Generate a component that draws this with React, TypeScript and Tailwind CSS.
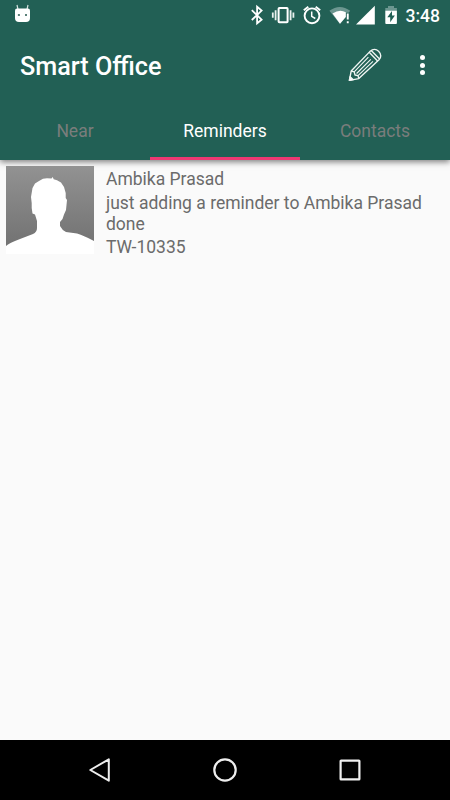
import React, { useState } from 'react';

const tabs = ['Near', 'Reminders', 'Contacts'];

const reminders = [
  {
    id: 'TW-10335',
    name: 'Ambika Prasad',
    text: 'just adding a reminder to Ambika Prasad done',
  },
];

const StatusBar: React.FC = () => (
  <div className="flex h-[30px] items-center justify-between pl-[14px] pr-[10px]">
    {/* Debug notification */}
    <svg className="h-[30px] w-[17px]" viewBox="14 0 17 30" fill="none">
      <path d="M18 9.5 17 5M27 9.5l1-4.500" stroke="#d5e2df" strokeWidth="1.2" />
      <path d="M15 10.5Q15 8.5 17 8.5H28Q30 8.5 30 10.5V18Q30 22 26 22H19Q15 22 15 18Z" fill="#fff" />
      <path d="M17.9 14h2v2h-2zM25 14h2v2h-2z" fill="#5b8079" />
    </svg>

    <div className="flex h-[30px] items-center">
      <svg className="h-[30px] w-[200px]" viewBox="200 0 200 30" fill="none">
        {/* Bluetooth */}
        <path d="M251.8 10.2 261.6 19.6 257.1 23.3V6.8L261.6 10.6 251.8 20" stroke="#fff" strokeWidth="1.8" />
        {/* Vibrate */}
        <rect x="278.6" y="8" width="9" height="14.3" rx="0.7" stroke="#fff" strokeWidth="2" />
        <path d="M275.6 10.2v10M290.6 10.2v10M272.8 12.4v5.4M293.4 12.4v5.4" stroke="#e9f0ee" strokeWidth="1.8" />
        {/* Alarm */}
        <circle cx="312" cy="15.8" r="7.4" stroke="#fff" strokeWidth="1.9" />
        <path d="M303.8 10.3 308.3 6.7M320.2 10.3 315.7 6.7" stroke="#fff" strokeWidth="1.9" />
        <path d="M311.7 11.6v4.7l3.6 2.2" stroke="#fff" strokeWidth="1.5" />
        {/* Wifi */}
        <path d="M329.4 10.8Q339.8 3 350.2 10.8L348.6 12.8H345.6V17L340 24Z" fill="#6c9690" />
        <path d="M332.5 13.500Q339.8 8.5 345.8 12.2V17L340 23.8Z" fill="#fff" />
        <path d="M346.8 13.5h1.9v6.1h-1.9zM346.8 21.2h1.9v2h-1.9z" fill="#fff" />
        {/* Cell signal */}
        <path d="M356 24.6 374.8 5.8V24.6Z" fill="#fff" />
        {/* Battery */}
        <path d="M385.3 8H388V6H394V8H396.9V11H385.3Z" fill="#6c9690" />
        <path d="M385.3 10.8H396.9V23.1Q396.9 24 396 24H386.2Q385.3 24 385.3 23.1Z" fill="#fff" />
        <path d="M392 11 387.3 17.2H390.2V22.2L394.9 15.5H392Z" fill="#226055" />
      </svg>
      <span className="w-[40px] pt-[2px] text-right text-[17.5px] font-medium leading-[30px] text-white">3:48</span>
    </div>
  </div>
);

const Toolbar: React.FC = () => (
  <div className="flex h-[70px] items-center pl-5 pr-[17px]">
    <h1 className="flex-1 pt-[4px] text-[25.2px] font-medium leading-[30px] text-white">Smart Office</h1>
    <button aria-label="Edit" className="mr-[30px]">
      <svg className="h-[34px] w-[34px]" viewBox="348 48 34 34" fill="none" stroke="#f1f6f4" strokeWidth="1.35" strokeLinejoin="round">
        <path d="M349.4 80.4 351.2 71 369.8 51.6Q374.5 47.3 378.6 51.2 382.5 55.2 379.3 59.4L358.8 78.6Z" />
        <path d="M369.2 52.2 377.6 61M371.2 50.5 379.6 59" />
        <path d="M351.2 71 354.2 71.9 355 75 358 75.6 358.8 78.6" />
        <path d="M354.2 71.9 368.4 57.2M358 75.6 373 61.4" strokeWidth="1.1" />
        <path d="M356.6 73.500 370.8 59.300" strokeWidth="1.1" />
        <path d="M349.4 80.4 350.1 76.7 353.3 79.700Z" fill="#fff" />
      </svg>
    </button>
    <button aria-label="More options" className="flex w-[21px] flex-col items-center gap-[2.5px]">
      <span className="h-[5px] w-[5px] rounded-full bg-white" />
      <span className="h-[5px] w-[5px] rounded-full bg-white" />
      <span className="h-[5px] w-[5px] rounded-full bg-white" />
    </button>
  </div>
);

const Avatar: React.FC = () => (
  <svg className="h-[88px] w-[88px] shrink-0" viewBox="0 0 88 88">
    <defs>
      <linearGradient id="avatarBg" x1="0" y1="0" x2="0" y2="1">
        <stop offset="0" stopColor="#929292" />
        <stop offset="1" stopColor="#6f6f6f" />
      </linearGradient>
    </defs>
    <rect width="88" height="88" fill="url(#avatarBg)" />
    <path
      d="M0 88V80Q3 77 14 73L27 68Q31 66 31 62V55L29 48.5 26.500 47.5 25.7 42V37L25 31 26.5 22 29 17.5 33 15 37 12.7 41 12.200 45.500 12.4 46.700 11 47.700 13.2 51 14.200 55 16.500 58 21 59.700 27V32L61 34 60 44 58 48.500 56.500 53 54 56V60Q56 64 60 66L71 67.500Q78 69.500 88 75V88Z"
      fill="#fff"
    />
  </svg>
);

const NavigationBar: React.FC = () => (
  <nav className="flex h-[60px] items-center justify-center gap-[101px] bg-black">
    <button aria-label="Back">
      <svg className="h-6 w-6" viewBox="0 0 24 24" fill="none" stroke="#eee" strokeWidth="2" strokeLinejoin="round">
        <path d="M2.300 12 20.800 1.300V22.700Z" />
      </svg>
    </button>
    <button aria-label="Home">
      <svg className="h-6 w-6" viewBox="0 0 24 24" fill="none" stroke="#eee" strokeWidth="2.2">
        <circle cx="12" cy="12" r="10.700" />
      </svg>
    </button>
    <button aria-label="Recent apps">
      <svg className="h-6 w-6" viewBox="0 0 24 24" fill="none" stroke="#eee" strokeWidth="2.2">
        <rect x="2.600" y="2.600" width="18.800" height="18.800" rx="0.5" />
      </svg>
    </button>
  </nav>
);

const App: React.FC = () => {
  const [activeTab, setActiveTab] = useState('Reminders');

  return (
    <div className="flex h-screen w-full flex-col bg-[#fafafa] font-[Roboto,sans-serif]">
      <header className="h-[160px] shrink-0 bg-[#226055] shadow-[0_2px_6px_rgba(0,0,0,0.5)]">
        <StatusBar />
        <Toolbar />
        <div className="grid h-[60px] grid-cols-3">
          {tabs.map((tab) => (
            <button
              key={tab}
              onClick={() => setActiveTab(tab)}
              className={`border-b-[3px] pt-[5px] text-[17.5px] leading-[24px] ${
                tab === activeTab ? 'border-[#f03873] text-white' : 'border-transparent text-[#7a7d7c]'
              }`}
            >
              {tab}
            </button>
          ))}
        </div>
      </header>

      <main className="flex-1">
        {activeTab === 'Reminders' &&
          reminders.map((reminder) => (
            <div key={reminder.id} className="flex gap-[12px] px-[6px] pt-[6px]">
              <Avatar />
              <div className="flex flex-col gap-[3px] pt-[3px] text-[17.5px] leading-[20.8px] text-[#6b6b6b]">
                <p>{reminder.name}</p>
                <p>{reminder.text}</p>
                <p>{reminder.id}</p>
              </div>
            </div>
          ))}
      </main>

      <NavigationBar />
    </div>
  );
};

export default App;
